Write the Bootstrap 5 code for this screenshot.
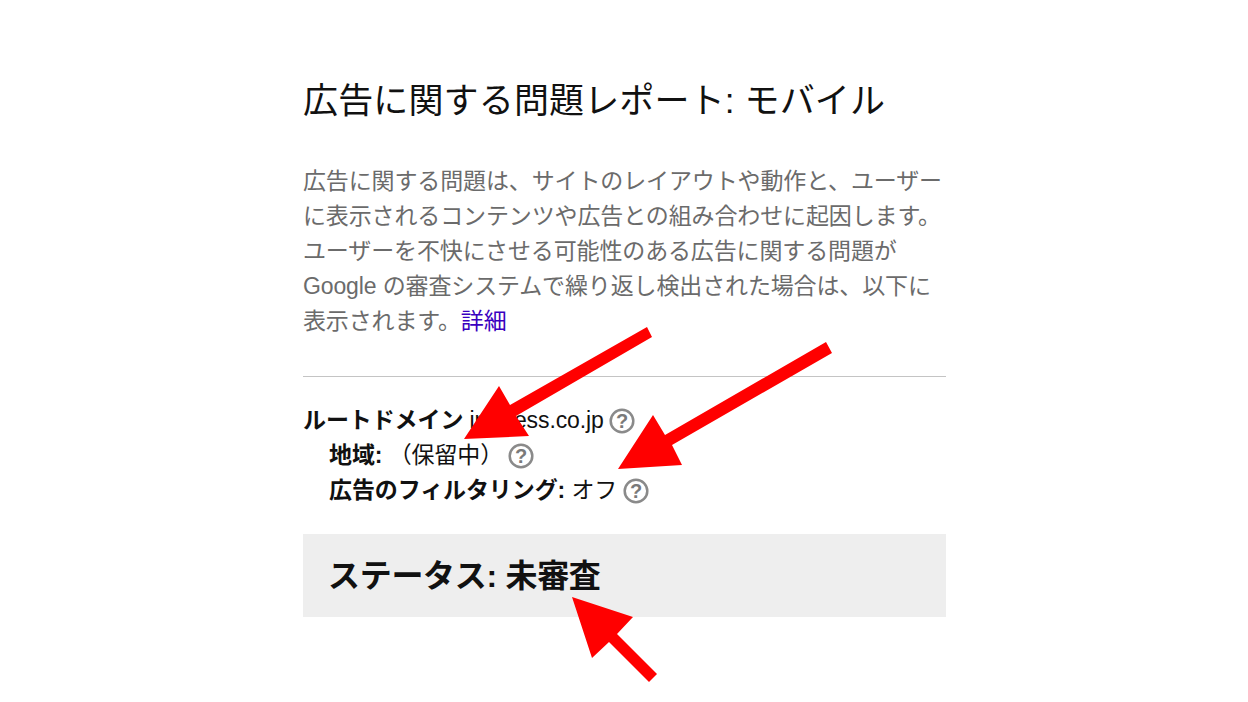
<!doctype html>
<html lang="ja"><head><meta charset="utf-8">
<link href="https://cdn.jsdelivr.net/npm/bootstrap@5.3.0/dist/css/bootstrap.min.css" rel="stylesheet">
<style>
html,body{height:702px;overflow:hidden;background:#fff}
body{font-family:"Liberation Sans","Noto Sans CJK JP",sans-serif;position:relative;color:#111}
.sheet{width:643px;margin-left:303px;padding-top:78px}
.ttl{font-size:35px;line-height:44px;font-weight:400;margin:1px 0 0;color:#111;white-space:nowrap;letter-spacing:.15px}
.desc{font-size:23px;line-height:35px;color:#6b6b6b;margin:41px 0 0;white-space:nowrap;letter-spacing:-.13px}
.desc a{color:#3a00c0;text-decoration:none}
.rule{border-top:1px solid #c4c4c4;margin:37px 0 26px;opacity:1}
.inf{font-size:23px;line-height:35px;white-space:nowrap;letter-spacing:-.1px}
.ind{padding-left:26px}
.qm{display:inline-block;vertical-align:-6px;margin-left:-1px}
.stat{background:#eee;height:83px;margin-top:26px;padding-left:25px;font-size:32px;font-weight:700;letter-spacing:-.3px;color:#111}
.over{position:absolute;left:0;top:0}
</style></head><body>
<div class="sheet">
<h1 class="ttl">広告に関する問題レポート: モバイル</h1>
<p class="desc">広告に関する問題は、サイトのレイアウトや動作と、ユーザー<br>に表示されるコンテンツや広告との組み合わせに起因します。<br>ユーザーを不快にさせる可能性のある広告に関する問題が<br>Google の審査システムで繰り返し検出された場合は、以下に<br>表示されます。<a href="#">詳細</a></p>
<hr class="rule">
<div class="inf"><b>ルートドメイン</b> impress.co.jp <svg class="qm" width="26" height="26" viewBox="0 0 26 26"><circle cx="13" cy="13" r="11.3" fill="#fff" stroke="#8a8a8a" stroke-width="2.5"/><text x="13" y="20" text-anchor="middle" font-size="20" font-weight="700" fill="#7a7a7a">?</text></svg></div>
<div class="inf ind"><b>地域:</b> （保留中） <svg class="qm" width="26" height="26" viewBox="0 0 26 26"><circle cx="13" cy="13" r="11.3" fill="#fff" stroke="#8a8a8a" stroke-width="2.5"/><text x="13" y="20" text-anchor="middle" font-size="20" font-weight="700" fill="#7a7a7a">?</text></svg></div>
<div class="inf ind"><b>広告のフィルタリング:</b> オフ <svg class="qm" width="26" height="26" viewBox="0 0 26 26"><circle cx="13" cy="13" r="11.3" fill="#fff" stroke="#8a8a8a" stroke-width="2.5"/><text x="13" y="20" text-anchor="middle" font-size="20" font-weight="700" fill="#7a7a7a">?</text></svg></div>
<div class="stat d-flex align-items-center">ステータス: 未審査</div>
</div>
<svg class="over" width="1248" height="702" viewBox="0 0 1248 702">
<g fill="#f00">
<polygon points="647,327 652,337 516,416 529,436 464,439 499,386 510,405"/>
<polygon points="826,342 832,353 672,445 682,465 618,469 653,415 665,435"/>
<polygon points="657,674 649,682 609,642 592,658 572,597 633,617 617,634"/>
</g></svg>
</body></html>
